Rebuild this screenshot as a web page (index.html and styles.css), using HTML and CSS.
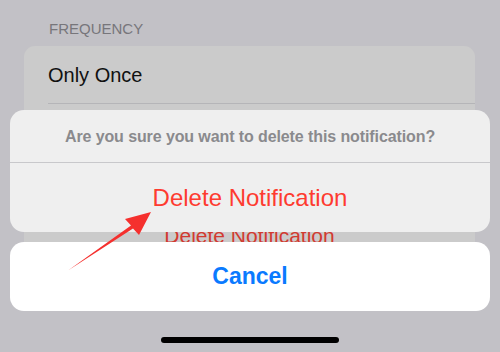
FILE: index.html
```html
<!DOCTYPE html>
<html>
<head>
<meta charset="utf-8">
<link rel="stylesheet" href="styles.css">
</head>
<body>
<div class="screen">
  <div class="section-label">FREQUENCY</div>
  <div class="group">
    <div class="row">Only Once</div>
    <div class="row row-delete">Delete Notification</div>
  </div>

  <div class="sheet">
    <div class="alert">
      <div class="alert-title">Are you sure you want to delete this notification?</div>
      <div class="alert-action">Delete Notification</div>
    </div>
    <div class="cancel">Cancel</div>
    <div class="home-bar"></div>
  </div>

  <svg class="arrow" width="500" height="352" viewBox="0 0 500 352">
    <polygon points="151,212 139,235 133,228.6 68,270.5 131,225.4 125,219" fill="#f5302e"/>
  </svg>
</div>
</body>
</html>
```

FILE: styles.css
```css
html, body {
  margin: 0;
  padding: 0;
}
body {
  width: 500px;
  height: 352px;
  overflow: hidden;
  background: #c2c1c6;
  font-family: "Liberation Sans", Arial, sans-serif;
}
.screen {
  position: relative;
  width: 500px;
  height: 352px;
  overflow: hidden;
}
.section-label {
  padding: 20px 0 0 49px;
  height: 26px;
  font-size: 15px;
  line-height: 17px;
  color: #77767b;
}
.group {
  margin: 0 25px 0 24px;
  background: #cbcbcb;
  border-radius: 11px 11px 0 0;
  height: 198px;
  overflow: hidden;
}
.row {
  height: 58px;
  margin-left: 24px;
  border-bottom: 1px solid #b5b5b8;
  box-sizing: border-box;
  font-size: 20px;
  line-height: 58px;
  color: #111;
}
.row-delete {
  margin-left: 0;
  border-bottom: none;
  padding-top: 112px;
  height: auto;
  text-align: center;
  font-size: 21px;
  line-height: 40px;
  color: #d23a30;
}
.sheet {
  position: absolute;
  left: 10px;
  right: 10px;
  top: 110px;
  display: flex;
  flex-direction: column;
  align-items: stretch;
}
.alert {
  background: #efefef;
  border-radius: 14px;
  height: 122px;
  display: flex;
  flex-direction: column;
}
.alert-title {
  height: 53px;
  border-bottom: 1px solid #c8c8cb;
  box-sizing: border-box;
  text-align: center;
  font-size: 16px;
  font-weight: bold;
  letter-spacing: -0.1px;
  line-height: 54px;
  color: #8a8a8d;
}
.alert-action {
  flex: 1;
  text-align: center;
  font-size: 24px;
  line-height: 70px;
  color: #fe3b30;
}
.cancel {
  margin-top: 10px;
  height: 69px;
  background: #ffffff;
  border-radius: 14px;
  text-align: center;
  font-size: 23px;
  font-weight: bold;
  line-height: 69px;
  color: #0a7aff;
}
.home-bar {
  align-self: center;
  margin-top: 26px;
  width: 178px;
  height: 6px;
  border-radius: 3px;
  background: #000;
}
.arrow {
  position: absolute;
  left: 0;
  top: 0;
}
```
